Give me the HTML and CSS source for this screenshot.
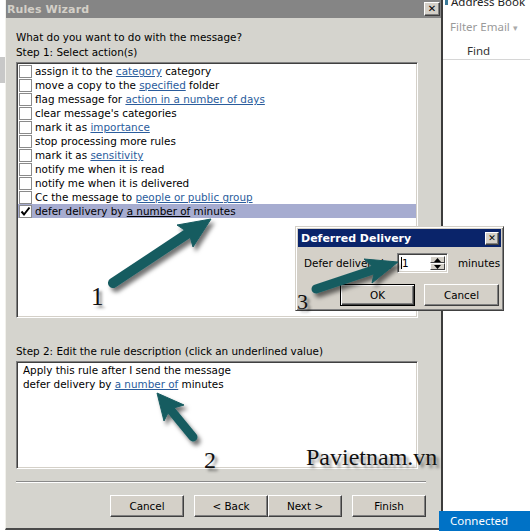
FILE: index.html
```html
<!DOCTYPE html>
<html>
<head>
<meta charset="utf-8">
<link rel="stylesheet" href="styles.css">
</head>
<body>
<div class="screen">
  <div class="leftstrip"><div class="lsblock"></div></div>
  <div class="wizard">
    <div class="titlebar">
      <span class="title">Rules Wizard</span>
      <span class="xbtn">✕</span>
    </div>
    <div class="wbody">
      <div class="q">What do you want to do with the message?</div>
      <div class="step">Step 1: Select action(s)</div>
      <div class="listbox">
        <div class="row"><span class="cb"></span>assign it to the&nbsp;<span class="lnk">category</span>&nbsp;category</div>
        <div class="row"><span class="cb"></span>move a copy to the&nbsp;<span class="lnk">specified</span>&nbsp;folder</div>
        <div class="row"><span class="cb"></span>flag message for&nbsp;<span class="lnk">action in a number of days</span></div>
        <div class="row"><span class="cb"></span>clear message's categories</div>
        <div class="row"><span class="cb"></span>mark it as&nbsp;<span class="lnk">importance</span></div>
        <div class="row"><span class="cb"></span>stop processing more rules</div>
        <div class="row"><span class="cb"></span>mark it as&nbsp;<span class="lnk">sensitivity</span></div>
        <div class="row"><span class="cb"></span>notify me when it is read</div>
        <div class="row"><span class="cb"></span>notify me when it is delivered</div>
        <div class="row"><span class="cb"></span>Cc the message to&nbsp;<span class="lnk">people or public group</span></div>
        <div class="row sel"><span class="cb checked"><svg width="11" height="11" viewBox="0 0 11 11"><path d="M1.5 5.5 L4 8.5 L9.5 1.5" fill="none" stroke="#000" stroke-width="2"/></svg></span>defer delivery by&nbsp;<span class="lnk-sel">a number of</span>&nbsp;minutes</div>
      </div>
      <div class="step step2">Step 2: Edit the rule description (click an underlined value)</div>
      <div class="descbox">
        <div class="dline">Apply this rule after I send the message</div>
        <div class="dline">defer delivery by&nbsp;<span class="lnk">a number of</span>&nbsp;minutes</div>
      </div>
      <div class="sep"></div>
      <div class="buttons">
        <span class="btn gap">Cancel</span>
        <span class="btn">&lt; Back</span>
        <span class="btn gap">Next &gt;</span>
        <span class="btn">Finish</span>
      </div>
    </div>
  </div>
  <div class="rightpanel">
    <div class="ab"><span class="abicon"></span><span>Address Book</span></div>
    <div class="filter">Filter Email <span class="caret">▾</span></div>
    <div class="find">Find</div>
    <div class="rline"></div>
    <div class="spacer"></div>
    <div class="connected">Connected</div>
  </div>

  <div class="ddialog">
    <div class="dtitle">
      <span class="dtitletext">Deferred Delivery</span>
      <span class="xbtn small">✕</span>
    </div>
    <div class="drow">
      <span class="dlabel">Defer delivery by</span>
      <span class="spin">
        <span class="field"><span class="cursor"></span>1</span>
        <span class="spinbtns">
          <span class="sb"><svg width="7" height="4" viewBox="0 0 7 4"><path d="M0 4 L3.5 0 L7 4Z" fill="#000"/></svg></span>
          <span class="sb"><svg width="7" height="4" viewBox="0 0 7 4"><path d="M0 0 L3.5 4 L7 0Z" fill="#000"/></svg></span>
        </span>
      </span>
      <span class="dmin">minutes</span>
    </div>
    <div class="dbtns">
      <span class="btn dbtn default">OK</span>
      <span class="btn dbtn">Cancel</span>
    </div>
  </div>

  <svg class="annot" width="530" height="531" viewBox="0 0 530 531">
    <defs>
      <filter id="sh" x="-20%" y="-20%" width="150%" height="150%">
        <feDropShadow dx="3" dy="4" stdDeviation="2.2" flood-color="#000" flood-opacity="0.55"/>
      </filter>
    </defs>
    <g filter="url(#sh)" fill="#185c61" stroke="#185c61">
      <line x1="113" y1="283" x2="190" y2="232" stroke-width="10" stroke-linecap="round"/>
      <polygon points="211,219 193,247 189,233 177,225" stroke-width="1"/>
      <line x1="316" y1="289" x2="376" y2="269" stroke-width="9" stroke-linecap="round"/>
      <polygon points="398,262 372,283 375,269 364,259" stroke-width="1"/>
      <line x1="193" y1="437" x2="170" y2="409" stroke-width="9" stroke-linecap="round"/>
      <polygon points="157,393 184,405 170,409 164,421" stroke-width="1"/>
    </g>
  </svg>
  <div class="num n1">1</div>
  <div class="num n2">2</div>
  <div class="num n3">3</div>
  <div class="wm">Pavietnam.vn</div>
</div>
</body>
</html>
```

FILE: styles.css
```css
html, body {
  margin: 0;
  padding: 0;
}
body {
  width: 530px;
  height: 531px;
  overflow: hidden;
  background: #fff;
  font-family: "DejaVu Sans", sans-serif;
  font-size: 10.4px;
  color: #000;
}
.screen {
  position: relative;
  display: flex;
  width: 530px;
  height: 531px;
}
.leftstrip {
  width: 5px;
  flex: none;
  background: #fff;
  display: flex;
  flex-direction: column;
}
.lsblock {
  margin-top: 57px;
  height: 26px;
  background: #c8c8c8;
}
.wizard {
  width: 438px;
  height: 530px;
  flex: none;
  box-sizing: border-box;
  background: #d5d4ce;
  border-left: 1px solid #f2f1ec;
  border-right: 2px solid #3c3c3c;
  border-bottom: 2px solid #4a4a4a;
  display: flex;
  flex-direction: column;
}
.titlebar {
  height: 18px;
  flex: none;
  background: #858585;
  display: flex;
  align-items: center;
  justify-content: space-between;
  padding: 0 1px 0 1px;
}
.title {
  color: #d4d0c8;
  font-weight: bold;
  font-size: 11px;
  letter-spacing: 0.1px;
}
.xbtn {
  width: 16px;
  height: 14px;
  box-sizing: border-box;
  background: #d4d0c8;
  border: 1px solid;
  border-color: #fff #404040 #404040 #fff;
  box-shadow: inset -1px -1px #808080;
  display: flex;
  align-items: center;
  justify-content: center;
  font-size: 10px;
  font-weight: bold;
  line-height: 1;
  color: #000;
}
.wbody {
  padding: 12px 15px 0 10px;
  display: flex;
  flex-direction: column;
}
.q {
  line-height: 14px;
  margin-bottom: 1px;
}
.step {
  line-height: 14px;
}
.listbox,
.descbox {
  width: 402px;
  box-sizing: border-box;
  background: #fff;
  border: 1px solid;
  border-color: #808080 #fff #fff #808080;
  box-shadow: inset 1px 1px #404040, inset -1px -1px #d4d0c8;
  padding: 1px;
}
.listbox {
  margin-top: 3px;
  height: 256px;
}
.row {
  height: 14px;
  line-height: 14px;
  display: flex;
  align-items: center;
  white-space: nowrap;
  padding-left: 1px;
}
.row.sel {
  background: #a6acd0;
}
.cb {
  width: 13px;
  height: 13px;
  flex: none;
  box-sizing: border-box;
  border: 1px solid #8a8a8a;
  background: #fff;
  margin-right: 3px;
  display: flex;
  align-items: center;
  justify-content: center;
}
.lnk {
  color: #2a5c9c;
  text-decoration: underline;
}
.lnk-sel {
  color: #000;
  text-decoration: underline;
}
.step2 {
  margin-top: 26px;
}
.descbox {
  margin-top: 3px;
  height: 108px;
  padding: 1px 0 0 6px;
}
.dline {
  line-height: 14px;
  white-space: nowrap;
  display: flex;
}
.sep {
  margin-top: 12px;
  height: 0;
  border-top: 1px solid #8a8a8a;
  border-bottom: 1px solid #fff;
}
.buttons {
  margin-top: 12px;
  display: flex;
  justify-content: flex-end;
}
.btn {
  width: 74px;
  height: 22px;
  box-sizing: border-box;
  background: #d4d0c8;
  border: 1px solid;
  border-color: #fff #404040 #404040 #fff;
  box-shadow: inset -1px -1px #808080;
  display: flex;
  align-items: center;
  justify-content: center;
}
.btn.gap {
  margin-right: 10px;
}
.rightpanel {
  flex: 1;
  display: flex;
  flex-direction: column;
  background: #fff;
  font-family: "Noto Sans", "Open Sans", sans-serif;
  font-size: 11.5px;
}
.ab {
  margin-top: -5px;
  height: 14px;
  line-height: 14px;
  display: flex;
  align-items: center;
  color: #222;
  white-space: nowrap;
}
.abicon {
  width: 3px;
  height: 6px;
  margin-left: 2px;
  margin-right: 3px;
  background: #3a7a9a;
}
.filter {
  margin-top: 11px;
  height: 14px;
  line-height: 14px;
  padding-left: 7px;
  color: #9a9a9a;
  white-space: nowrap;
}
.caret {
  font-size: 9px;
  color: #aaa;
}
.find {
  margin-top: 10px;
  height: 14px;
  line-height: 14px;
  padding-left: 24px;
  color: #333;
}
.rline {
  margin-top: 1px;
  height: 1px;
  background: #d6d6d6;
}
.spacer {
  flex: 1;
}
.connected {
  height: 20px;
  line-height: 20px;
  margin-left: -4px;
  padding-left: 11px;
  background: #0072c6;
  color: #fff;
  font-size: 11.5px;
}
.ddialog {
  position: absolute;
  left: 295px;
  top: 226px;
  width: 209px;
  height: 85px;
  box-sizing: border-box;
  background: #d4d0c8;
  border: 1px solid;
  border-color: #d4d0c8 #404040 #404040 #d4d0c8;
  box-shadow: inset 1px 1px #fff, inset -1px -1px #808080;
  padding: 2px;
  display: flex;
  flex-direction: column;
}
.dtitle {
  height: 18px;
  flex: none;
  background: #0a246a;
  display: flex;
  align-items: center;
  justify-content: space-between;
  padding: 0 2px 0 3px;
}
.dtitletext {
  color: #fff;
  font-weight: bold;
  font-size: 11px;
}
.xbtn.small {
  width: 14px;
  height: 13px;
  font-size: 9px;
}
.drow {
  margin-top: 6px;
  height: 20px;
  display: flex;
  align-items: center;
}
.dlabel {
  width: 93px;
  padding-left: 6px;
  box-sizing: content-box;
  white-space: nowrap;
}
.spin {
  width: 51px;
  height: 20px;
  box-sizing: border-box;
  border: 1px solid;
  border-color: #808080 #fff #fff #808080;
  box-shadow: inset 1px 1px #404040, inset -1px -1px #d4d0c8;
  background: #fff;
  display: flex;
  padding: 2px;
}
.field {
  flex: 1;
  display: flex;
  align-items: center;
  padding-left: 1px;
}
.cursor {
  width: 1px;
  height: 12px;
  background: #000;
  margin-right: 0;
}
.spinbtns {
  width: 15px;
  display: flex;
  flex-direction: column;
}
.sb {
  flex: 1;
  box-sizing: border-box;
  background: #d4d0c8;
  border: 1px solid;
  border-color: #fff #404040 #404040 #fff;
  display: flex;
  align-items: center;
  justify-content: center;
}
.dmin {
  margin-left: 10px;
}
.dbtns {
  margin-top: 11px;
  padding-left: 42px;
  display: flex;
  gap: 9px;
}
.dbtn {
  width: 75px;
}
.btn.default {
  border: 1px solid #000;
  box-shadow: inset 1px 1px #fff, inset -1px -1px #404040, inset -2px -2px #808080;
}
.annot {
  position: absolute;
  left: 0;
  top: 0;
  pointer-events: none;
}
.num {
  position: absolute;
  font-family: "Liberation Serif", serif;
  color: #111;
  line-height: 1;
  text-shadow: 3px 3px 3px rgba(0, 0, 0, 0.45);
}
.n1 {
  left: 91px;
  top: 284px;
  font-size: 25px;
}
.n2 {
  left: 204px;
  top: 448px;
  font-size: 24px;
}
.n3 {
  left: 297px;
  top: 291px;
  font-size: 22px;
}
.wm {
  position: absolute;
  left: 306px;
  top: 445px;
  font-family: "Liberation Serif", serif;
  font-size: 24px;
  line-height: 1;
  color: #111;
  text-shadow: 3px 3px 3px rgba(0, 0, 0, 0.4);
}
```
